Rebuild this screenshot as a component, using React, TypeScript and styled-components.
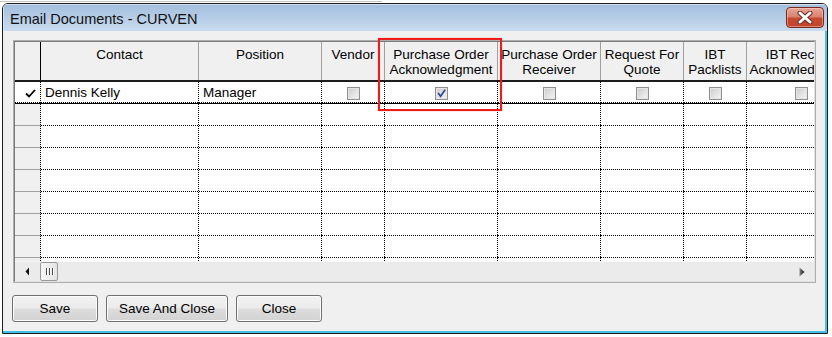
import styled, { createGlobalStyle } from "styled-components";

const GlobalStyle = createGlobalStyle`
  html, body {
    margin: 0;
    padding: 0;
    background: #fff;
  }
  body {
    font-family: "Liberation Sans", Arial, sans-serif;
  }
  * {
    box-sizing: border-box;
  }
`;

// crisp 1px on / 1px off grid lines, like the old grid control draws them
const dotsRight = "linear-gradient(#000 50%, transparent 50%) right top / 1px 2px repeat-y";
const dotsBottom = "linear-gradient(90deg, #000 50%, transparent 50%) left bottom / 2px 1px repeat-x";

const Page = styled.div`
  position: relative;
  width: 832px;
  height: 337px;
  overflow: hidden;
  padding: 3px 0 0 2px;
  background: linear-gradient(#c4c4c4, #c4c4c4) 0 1px / 382px 1px no-repeat,
    #fff;
`;

const Window = styled.div`
  width: 826px;
  height: 331px;
  border: 1px solid #1d1d1d;
  border-radius: 6px 6px 0 0;
  overflow: hidden;
  display: flex;
  flex-direction: column;
`;

const TitleBar = styled.div`
  flex: none;
  height: 27px;
  display: flex;
  align-items: center;
  justify-content: space-between;
  padding: 0 3px 0 7px;
  background: linear-gradient(#a2bedd, #c9dbef);
  box-shadow: inset 1px 1px 0 #d3e2f2;
`;

const Title = styled.span`
  padding-top: 2px;
  font-size: 14.5px;
  color: #111;
`;

const CloseButton = styled.div`
  width: 38px;
  height: 21px;
  display: flex;
  align-items: center;
  justify-content: center;
  border: 1px solid #7a2a1c;
  border-radius: 4px;
  background: linear-gradient(
    #e9a898 0%,
    #d9826e 45%,
    #c64a32 55%,
    #c0432c 100%
  );
  box-shadow: inset 0 0 0 1px rgba(255, 220, 210, 0.45);
`;

const Client = styled.div`
  flex: 1;
  display: flex;
  flex-direction: column;
  align-items: flex-start;
  padding: 9px 0 0 10px;
  background: #f0f0f0;
  border-right: 2px solid #45bfe6;
  border-bottom: 2px solid #45bfe6;
`;

const GridFrame = styled.div`
  width: 803px;
  height: 243px;
  border: 1px solid #adadad;
`;

const GridInner = styled.div`
  height: 100%;
  display: flex;
  flex-direction: column;
  border: 1px solid;
  border-color: #7a7a7a #e3e3e3 #e3e3e3 #7a7a7a;
  overflow: hidden;
`;

const TableArea = styled.div`
  flex: none;
  height: 219px;
  overflow: hidden;
  background: #fff;
`;

const TEMPLATE = "26px 158px 123px 63px 113px 103px 83px 63px 109px";

const HeaderRow = styled.div`
  display: grid;
  grid-template-columns: ${TEMPLATE};
  width: 841px;
  height: 40px;
  background: #f0f0f0;
  border-bottom: 2px solid #1c1c1c;
`;

const HeadCell = styled.div<{ $selector?: boolean }>`
  padding-top: 5px;
  border-right: 1px solid ${(p) => (p.$selector ? "#000" : "#a0a0a0")};
  text-align: center;
  font-size: 13.5px;
  line-height: 15px;
  color: #000;
  white-space: nowrap;
  overflow: hidden;
`;

const Row = styled.div<{ $current?: boolean }>`
  display: grid;
  grid-template-columns: ${TEMPLATE};
  width: 841px;
  height: 22px;
  ${(p) => p.$current && "border-bottom: 1px solid #000;"}
`;

const SelectorCell = styled.div<{ $current?: boolean }>`
  display: flex;
  align-items: center;
  padding: 1px 1px 0 10px;
  background: ${(p) =>
    p.$current ? `${dotsRight}, ${dotsBottom}, #fff` : `${dotsRight}, #f0f0f0`};
  border-bottom: ${(p) => (p.$current ? "none" : "1px solid #a0a0a0")};
`;

const Cell = styled.div<{ $check?: boolean }>`
  display: flex;
  align-items: center;
  justify-content: ${(p) => (p.$check ? "center" : "flex-start")};
  padding: ${(p) => (p.$check ? "3px 1px 1px 0" : "0 1px 1px 4px")};
  background: ${dotsRight}, ${dotsBottom}, #fff;
  font-size: 13.5px;
  color: #000;
  white-space: nowrap;
  overflow: hidden;
`;

const CheckBox = styled.span`
  width: 13px;
  height: 13px;
  display: flex;
  align-items: center;
  justify-content: center;
  border: 1px solid #8f8f8f;
  background: linear-gradient(135deg, #cbcbcb, #f6f6f6);
  box-shadow: inset 0 0 0 1px #e6e6e6;
`;

const ScrollBar = styled.div`
  flex: none;
  height: 20px;
  display: flex;
  align-items: stretch;
  background: #ebebeb;
  border-top: 1px solid #f6f6f6;
`;

const ArrowButton = styled.div<{ $width: number }>`
  width: ${(p) => p.$width}px;
  display: flex;
  align-items: center;
  justify-content: center;
`;

const Thumb = styled.div`
  width: 18px;
  display: flex;
  align-items: center;
  justify-content: center;
  gap: 2px;
  border: 1px solid #9a9a9a;
  border-radius: 2px;
  background: linear-gradient(90deg, #f6f6f6, #e4e4e4);
`;

const Grip = styled.span`
  width: 1px;
  height: 7px;
  background: #4a4a4a;
  box-shadow: 1px 0 0 #fff;
`;

const Track = styled.div`
  flex: 1;
`;

const ButtonRow = styled.div`
  display: flex;
  gap: 8px;
  margin: 12px 0 0 -1px;
`;

const Button = styled.button<{ $width: number }>`
  width: ${(p) => p.$width}px;
  height: 27px;
  padding: 0;
  border: 1px solid #707070;
  border-radius: 3px;
  background: linear-gradient(
    #f3f3f3 0%,
    #ebebeb 48%,
    #dddddd 52%,
    #d2d2d2 100%
  );
  box-shadow: inset 0 0 0 1px #fbfbfb;
  font-family: "Liberation Sans", Arial, sans-serif;
  font-size: 13.5px;
  color: #000;
`;

const Highlight = styled.div`
  position: absolute;
  left: 378px;
  top: 38px;
  width: 124px;
  height: 73px;
  border: 2px solid #f01c1c;
  box-shadow: 0 0 1px rgba(255, 40, 40, 0.6);
  pointer-events: none;
`;

type Column = { title: string[]; width: number; check?: boolean };

const columns: Column[] = [
  { title: ["Contact"], width: 158 },
  { title: ["Position"], width: 123 },
  { title: ["Vendor"], width: 63, check: true },
  { title: ["Purchase Order", "Acknowledgment"], width: 113, check: true },
  { title: ["Purchase Order", "Receiver"], width: 103, check: true },
  { title: ["Request For", "Quote"], width: 83, check: true },
  { title: ["IBT", "Packlists"], width: 63, check: true },
  { title: ["IBT Receipt", "Acknowledgment"], width: 109, check: true },
];

const contact = {
  values: ["Dennis Kelly", "Manager"],
  checks: [false, true, false, false, false, false],
};

function RowCheck() {
  return (
    <svg width="11" height="9" viewBox="0 0 11 9">
      <path d="M1 4.5 L4 7.5 L10 1" fill="none" stroke="#000" strokeWidth="1.8" />
    </svg>
  );
}

function BoxCheck() {
  return (
    <svg width="11" height="11" viewBox="0 0 11 11">
      <path
        d="M2.5 5.5 L4.6 8.2 L8.8 2.2"
        fill="none"
        stroke="#2f4796"
        strokeWidth="1.7"
        strokeLinecap="round"
      />
    </svg>
  );
}

function CloseGlyph() {
  return (
    <svg width="16" height="13" viewBox="0 0 16 13">
      <path d="M3 2 L13 11 M13 2 L3 11" stroke="#6a2a20" strokeWidth="5" strokeLinecap="round" />
      <path d="M3 2 L13 11 M13 2 L3 11" stroke="#fff" strokeWidth="3" strokeLinecap="round" />
    </svg>
  );
}

function ArrowLeft() {
  return (
    <svg width="5" height="9" viewBox="0 0 5 9">
      <path d="M4 0.5 L0.5 4.5 L4 8.5 Z" fill="#111" />
    </svg>
  );
}

function ArrowRight() {
  return (
    <svg width="6" height="10" viewBox="0 0 6 10">
      <defs>
        <linearGradient id="arr" x1="0" x2="1" y1="0" y2="0">
          <stop offset="0" stopColor="#8a8a8a" />
          <stop offset="1" stopColor="#111" />
        </linearGradient>
      </defs>
      <path d="M0.5 0.5 L5.5 5 L0.5 9.5 Z" fill="url(#arr)" />
    </svg>
  );
}

export default function App() {
  return (
    <>
      <GlobalStyle />
      <Page>
        <Window>
          <TitleBar>
            <Title>Email Documents - CURVEN</Title>
            <CloseButton>
              <CloseGlyph />
            </CloseButton>
          </TitleBar>
          <Client>
            <GridFrame>
              <GridInner>
                <TableArea>
                  <HeaderRow>
                    <HeadCell $selector />
                    {columns.map((c) => (
                      <HeadCell key={c.title.join(" ")}>
                        {c.title.map((line, i) => (
                          <div key={i}>{line}</div>
                        ))}
                      </HeadCell>
                    ))}
                  </HeaderRow>
                  <Row $current>
                    <SelectorCell $current>
                      <RowCheck />
                    </SelectorCell>
                    <Cell>{contact.values[0]}</Cell>
                    <Cell>{contact.values[1]}</Cell>
                    {contact.checks.map((on, i) => (
                      <Cell $check key={i}>
                        <CheckBox>{on && <BoxCheck />}</CheckBox>
                      </Cell>
                    ))}
                  </Row>
                  {Array.from({ length: 8 }).map((_, r) => (
                    <Row key={r}>
                      <SelectorCell />
                      {columns.map((c) => (
                        <Cell key={c.title.join(" ")} />
                      ))}
                    </Row>
                  ))}
                </TableArea>
                <ScrollBar>
                  <ArrowButton $width={25}>
                    <ArrowLeft />
                  </ArrowButton>
                  <Thumb>
                    <Grip />
                    <Grip />
                    <Grip />
                  </Thumb>
                  <Track />
                  <ArrowButton $width={24}>
                    <ArrowRight />
                  </ArrowButton>
                </ScrollBar>
              </GridInner>
            </GridFrame>
            <ButtonRow>
              <Button $width={86}>Save</Button>
              <Button $width={122}>Save And Close</Button>
              <Button $width={86}>Close</Button>
            </ButtonRow>
          </Client>
        </Window>
        <Highlight />
      </Page>
    </>
  );
}
